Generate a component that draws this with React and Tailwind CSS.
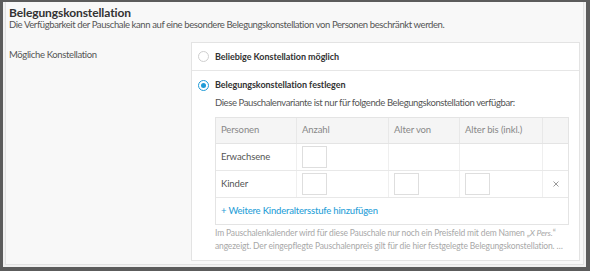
import React from 'react'

function Radio({ checked }) {
    return checked ? (
        <span className="w-[11px] h-[11px] rounded-full border-[1.5px] border-[#1f9bd7] flex items-center justify-center shrink-0">
            <span className="w-[5px] h-[5px] rounded-full bg-[#1f9bd7]" />
        </span>
    ) : (
        <span className="w-[11px] h-[11px] rounded-full border border-[#cfcfcf] bg-white shrink-0" />
    )
}

function Box() {
    return <span className="block w-[25px] h-[22px] border border-[#dedede] bg-white" />
}

const cols = 'grid grid-cols-[81px_92px_71px_83px_1fr]'

function App() {
    return (
        <div className="w-[590px] h-[271px] bg-[#5c5c5c] pl-[3px] pt-[2px] pr-[4px] pb-[4px] font-['Lato',sans-serif] overflow-hidden">
            <div className="w-full h-full bg-[#f1f1f1] pl-[2px] pr-[2px] pb-[2px]">
                <div className="w-full h-full bg-[#f8f8f8] border-l border-r border-b border-[#e2e2e2] pl-[3px] pt-[4.5px]">
                    {/* Header */}
                    <h1 className="text-[12px] font-bold text-[#333] leading-[12px] tracking-[-0.1px]">Belegungskonstellation</h1>
                    <p className="text-[9.5px] text-[#555] leading-[11px] tracking-[-0.4px] whitespace-nowrap">
                        Die Verfügbarkeit der Pauschale kann auf eine besondere Belegungskonstellation von Personen beschränkt werden.
                    </p>

                    <div className="flex mt-[12.5px]">
                        <div className="w-[182px] text-[9.5px] text-[#555] pt-[7px] leading-[12px] tracking-[-0.35px]">Mögliche Konstellation</div>

                        {/* Options box */}
                        <div className="w-[389px] h-[219px] bg-white border border-[#e3e3e3]">
                            <div className="h-[28px] flex items-center gap-[6px] pl-[6px] border-b border-[#e6e6e6]">
                                <Radio />
                                <span className="text-[9px] font-bold text-[#333] tracking-[-0.05px]">Beliebige Konstellation möglich</span>
                            </div>
                            <div className="pl-[6px] pt-[7px]">
                                <div className="flex items-center gap-[6px] h-[14px]">
                                    <Radio checked />
                                    <span className="text-[9px] font-bold text-[#333] tracking-[-0.05px]">Belegungskonstellation festlegen</span>
                                </div>
                                <div className="pl-[17px]">
                                    <p className="text-[9.5px] text-[#555] mt-[5px] leading-[12px] tracking-[-0.4px] whitespace-nowrap">
                                        Diese Pauschalenvariante ist nur für folgende Belegungskonstellation verfügbar:
                                    </p>

                                    {/* Table */}
                                    <div className="w-[354px] mt-[8px] border border-[#e4e4e4] text-[9.5px] tracking-[-0.1px]">
                                        <div className={`${cols} h-[26px] bg-[#f5f5f5] text-[#888] border-b border-[#e4e4e4]`}>
                                            <div className="flex items-center pl-[5px] border-r border-[#e8e8e8]">Personen</div>
                                            <div className="flex items-center pl-[5px] border-r border-[#e8e8e8]">Anzahl</div>
                                            <div className="flex items-center pl-[5px] border-r border-[#e8e8e8]">Alter von</div>
                                            <div className="flex items-center pl-[5px] border-r border-[#e8e8e8]">Alter bis (inkl.)</div>
                                            <div />
                                        </div>
                                        <div className={`${cols} h-[27px] text-[#555] border-b border-[#e8e8e8]`}>
                                            <div className="flex items-center pl-[5px] border-r border-[#efefef]">Erwachsene</div>
                                            <div className="flex items-center pl-[5px] border-r border-[#efefef]"><Box /></div>
                                            <div className="border-r border-[#efefef]" />
                                            <div className="border-r border-[#efefef]" />
                                            <div />
                                        </div>
                                        <div className={`${cols} h-[27px] text-[#555] border-b border-[#e8e8e8]`}>
                                            <div className="flex items-center pl-[5px] border-r border-[#efefef]">Kinder</div>
                                            <div className="flex items-center pl-[5px] border-r border-[#efefef]"><Box /></div>
                                            <div className="flex items-center pl-[5px] border-r border-[#efefef]"><Box /></div>
                                            <div className="flex items-center pl-[5px] border-r border-[#efefef]"><Box /></div>
                                            <div className="flex items-center justify-center">
                                                <svg width="6" height="6" viewBox="0 0 6 6" className="stroke-[#9a9a9a]">
                                                    <path d="M0.5 0.5L5.5 5.5M5.5 0.5L0.5 5.5" strokeWidth="1" />
                                                </svg>
                                            </div>
                                        </div>
                                        <div className="h-[26px] flex items-center pl-[5px] text-[#2b9fd8] font-medium tracking-[-0.2px]">
                                            + Weitere Kinderaltersstufe hinzufügen
                                        </div>
                                    </div>

                                    <p className="text-[8.5px] text-[#a8a8a8] mt-[2px] leading-[13px] tracking-[-0.15px] whitespace-nowrap">
                                        Im Pauschalenkalender wird für diese Pauschale nur noch ein Preisfeld mit dem Namen „<i>X Pers.</i>“
                                        <br />
                                        angezeigt. Der eingepflegte Pauschalenpreis gilt für die hier festgelegte Belegungskonstellation. …
                                    </p>
                                </div>
                            </div>
                        </div>
                    </div>
                </div>
            </div>
        </div>
    )
}

export default App
